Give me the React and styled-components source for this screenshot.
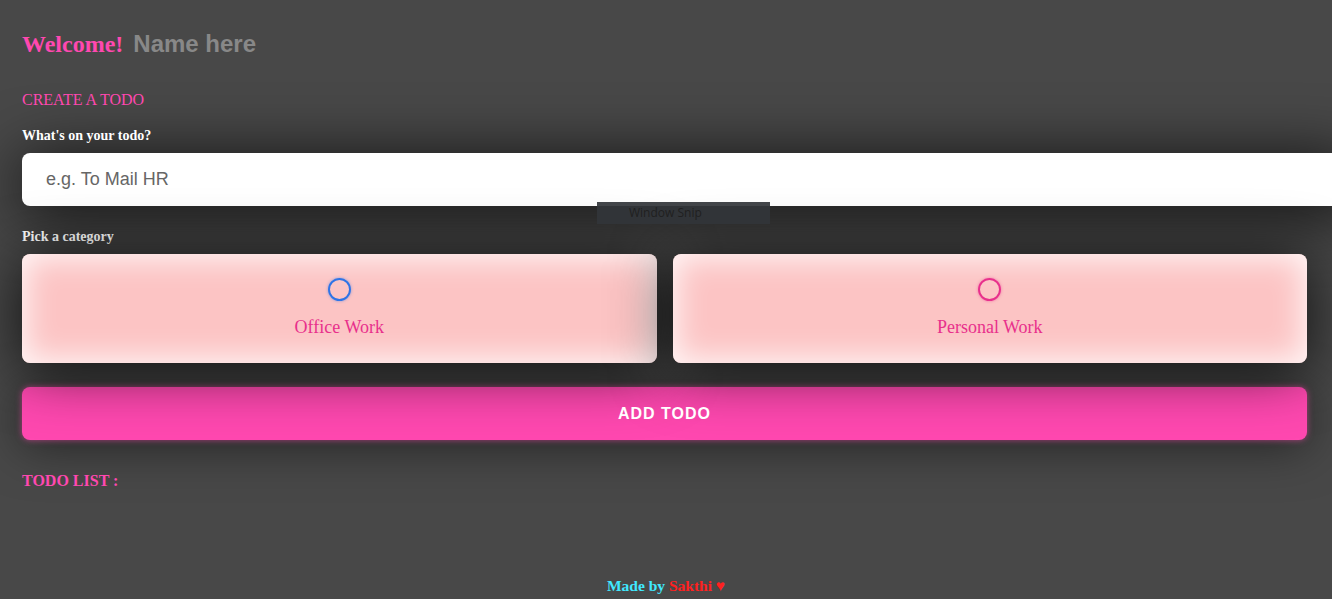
import React from 'react'
import styled, { createGlobalStyle } from 'styled-components'

const Global = createGlobalStyle`
  html, body {
    margin: 0;
    padding: 0;
    background: #484848;
    overflow: hidden;
  }
  * { box-sizing: border-box; }
`

const Page = styled.div`
  position: relative;
  min-height: 599px;
  padding: 30px 25px 0 22px;
  font-family: "Liberation Serif", "Times New Roman", serif;
`

const Greeting = styled.h2`
  margin: 0;
  display: flex;
  align-items: baseline;
  gap: 10px;
  font-size: 24px;
  line-height: 28px;
  color: #ff48b0;
  font-weight: bold;
`

const Name = styled.span`
  font-family: "Liberation Sans", Arial, sans-serif;
  color: #888888;
  font-size: 24px;
`

const SectionTitle = styled.h4`
  margin: 32px 0 0;
  font-size: 16px;
  line-height: 20px;
  font-weight: normal;
  color: #ff48b0;
`

const FieldLabel = styled.h4`
  margin: ${p => p.$top}px 0 8px;
  font-size: 14px;
  line-height: 18px;
  font-weight: bold;
  color: #ffffff;
`

const TodoInput = styled.input`
  display: block;
  width: calc(100% + 48px);
  height: 53px;
  border: none;
  outline: none;
  border-radius: 8px;
  padding: 0 24px;
  font-family: "Liberation Sans", Arial, sans-serif;
  font-size: 18px;
  color: #333;
  background: #fff;
  box-shadow: 0 6px 64px rgba(0, 0, 0, 0.85);
  &::placeholder { color: #666; }
`

const Options = styled.div`
  display: grid;
  grid-template-columns: 1fr 1fr;
  gap: 16px;
`

const Option = styled.label`
  height: 109px;
  border-radius: 8px;
  background: #fcc4c4;
  box-shadow: inset 0 0 30px 5px rgba(255, 255, 255, 0.85), 0 6px 60px rgba(0, 0, 0, 0.8);
  display: flex;
  flex-direction: column;
  align-items: center;
  justify-content: center;
  gap: 16px;
  padding-bottom: 2px;
  cursor: pointer;
`

const Bubble = styled.span`
  width: 23px;
  height: 23px;
  border-radius: 50%;
  border: 2px solid ${p => p.$color};
  box-shadow: 0 0 3px ${p => p.$color}88;
`

const OptionText = styled.span`
  font-size: 18px;
  line-height: 20px;
  color: #e8308c;
`

const AddButton = styled.button`
  display: block;
  width: 100%;
  height: 53px;
  margin-top: 24px;
  border: none;
  border-radius: 8px;
  background: #ff48b0;
  color: #fff;
  font-family: "Liberation Sans", Arial, sans-serif;
  font-weight: bold;
  font-size: 16px;
  letter-spacing: 1px;
  box-shadow: 0 0 6px rgba(255, 72, 176, 0.6), 0 6px 48px rgba(0, 0, 0, 0.5);
  cursor: pointer;
`

const ListTitle = styled.h3`
  margin: 31px 0 0;
  font-size: 16px;
  line-height: 20px;
  font-weight: bold;
  color: #ff48b0;
`

const Footer = styled.footer`
  position: absolute;
  left: 0;
  right: 0;
  bottom: 4px;
  text-align: center;
  font-size: 15.5px;
  font-weight: bold;
  font-family: "Liberation Serif", "Times New Roman", serif;
  color: #40e8ff;
`

const Heart = styled.span`
  color: #ff2020;
`

const Snip = styled.div`
  position: absolute;
  left: 597px;
  top: 202px;
  width: 173px;
  height: 22px;
  background: rgba(50, 53, 58, 0.92);
  color: #202020;
  font-family: "Open Sans", "Liberation Sans", sans-serif;
  font-size: 12px;
  line-height: 22px;
  padding-left: 32px;
`

export default function App() {
  return (
    <>
      <Global />
      <Page>
        <Greeting>
          Welcome! <Name>Name here</Name>
        </Greeting>
        <SectionTitle>CREATE A TODO</SectionTitle>
        <FieldLabel $top={17}>What's on your todo?</FieldLabel>
        <TodoInput placeholder="e.g. To Mail HR" />
        <FieldLabel $top={22}>Pick a category</FieldLabel>
        <Options>
          <Option>
            <Bubble $color="#2f74e6" />
            <OptionText>Office Work</OptionText>
          </Option>
          <Option>
            <Bubble $color="#e8308c" />
            <OptionText>Personal Work</OptionText>
          </Option>
        </Options>
        <AddButton>ADD TODO</AddButton>
        <ListTitle>TODO LIST :</ListTitle>
        <Snip>Window Snip</Snip>
        <Footer>
          Made by <Heart>Sakthi ♥</Heart>
        </Footer>
      </Page>
    </>
  )
}
